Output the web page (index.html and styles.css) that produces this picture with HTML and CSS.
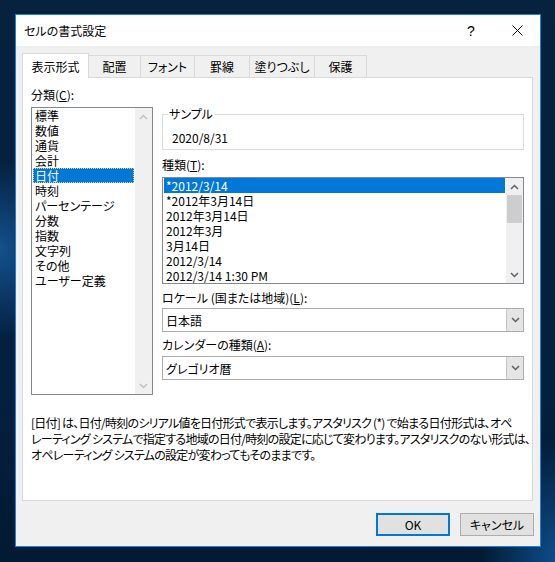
FILE: index.html
```html
<!DOCTYPE html>
<html lang="ja">
<head>
<meta charset="utf-8">
<title>セルの書式設定</title>
<link rel="stylesheet" href="styles.css">
</head>
<body>
<div class="dialog">
  <div class="titlebar">
    <span class="title">セルの書式設定</span>
    <span class="caption-btn help">?</span>
    <span class="caption-btn close">
      <svg width="11" height="11" viewBox="0 0 11 11"><path d="M0.5 0.5 L10.5 10.5 M10.5 0.5 L0.5 10.5" stroke="#000" stroke-width="1" fill="none"/></svg>
    </span>
  </div>

  <div class="body">
    <div class="tabs">
      <div class="tab active tab-format">表示形式</div>
      <div class="tab tab-align">配置</div>
      <div class="tab tab-font">フォント</div>
      <div class="tab tab-border">罫線</div>
      <div class="tab tab-fill">塗りつぶし</div>
      <div class="tab tab-protect">保護</div>
    </div>

    <div class="panel">
      <div class="grid">
        <div class="col-left">
          <div class="label">分類(<u>C</u>):</div>
          <div class="listbox category">
            <ul class="items">
              <li>標準</li>
              <li>数値</li>
              <li>通貨</li>
              <li>会計</li>
              <li class="selected focus">日付</li>
              <li>時刻</li>
              <li>パーセンテージ</li>
              <li>分数</li>
              <li>指数</li>
              <li>文字列</li>
              <li>その他</li>
              <li>ユーザー定義</li>
            </ul>
            <div class="vscroll disabled">
              <div class="sb-btn"><svg width="9" height="6" viewBox="0 0 9 6"><polyline points="1,5 4.5,1.5 8,5" /></svg></div>
              <div class="sb-track"></div>
              <div class="sb-btn"><svg width="9" height="6" viewBox="0 0 9 6"><polyline points="1,1 4.5,4.5 8,1" /></svg></div>
            </div>
          </div>
        </div>

        <div class="col-right">
          <fieldset class="sample">
            <legend>サンプル</legend>
            <div class="sample-value">2020/8/31</div>
          </fieldset>

          <div class="label label-types">種類(<u>T</u>):</div>
          <div class="listbox types">
            <ul class="items">
              <li class="selected">*2012/3/14</li>
              <li>*2012年3月14日</li>
              <li>2012年3月14日</li>
              <li>2012年3月</li>
              <li>3月14日</li>
              <li>2012/3/14</li>
              <li>2012/3/14 1:30 PM</li>
            </ul>
            <div class="vscroll">
              <div class="sb-btn"><svg width="9" height="6" viewBox="0 0 9 6"><polyline points="1,5 4.5,1.5 8,5" /></svg></div>
              <div class="sb-track"><div class="sb-thumb"></div></div>
              <div class="sb-btn"><svg width="9" height="6" viewBox="0 0 9 6"><polyline points="1,1 4.5,4.5 8,1" /></svg></div>
            </div>
          </div>

          <div class="label label-locale">ロケール (国または地域)(<u>L</u>):</div>
          <div class="combo combo-locale">
            <span class="combo-text">日本語</span>
            <span class="combo-btn"><svg width="9" height="6" viewBox="0 0 9 6"><polyline points="1,1 4.5,4.5 8,1" /></svg></span>
          </div>

          <div class="label label-calendar">カレンダーの種類(<u>A</u>):</div>
          <div class="combo combo-calendar">
            <span class="combo-text">グレゴリオ暦</span>
            <span class="combo-btn"><svg width="9" height="6" viewBox="0 0 9 6"><polyline points="1,1 4.5,4.5 8,1" /></svg></span>
          </div>
        </div>
      </div>

      <p class="desc">[日付] は、日付/時刻のシリアル値を日付形式で表示します。アスタリスク (*) で始まる日付形式は、オペ<br>レーティング システムで指定する地域の日付/時刻の設定に応じて変わります。アスタリスクのない形式は、<br>オペレーティング システムの設定が変わってもそのままです。</p>
    </div>

    <div class="buttons">
      <div class="btn default">OK</div>
      <div class="btn">キャンセル</div>
    </div>
  </div>
</div>
</body>
</html>
```

FILE: styles.css
```css
* {
  box-sizing: border-box;
}

html,
body {
  margin: 0;
}

body {
  width: 555px;
  height: 562px;
  overflow: hidden;
  padding: 14px 0 0 15px;
  font-family: "Noto Sans CJK JP", "Noto Sans", sans-serif;
  font-size: 12px;
  color: #000;
  font-feature-settings: "palt";
  background:
    radial-gradient(ellipse 60px 90px at 0px 250px, rgba(24, 98, 170, 0.75), rgba(24, 98, 170, 0) 100%),
    radial-gradient(ellipse 80px 120px at 560px 560px, rgba(18, 92, 165, 0.8), rgba(18, 92, 165, 0) 100%),
    linear-gradient(180deg, #07223f 0%, #04203d 40%, #03203e 70%, #021a33 100%);
}

/* window frame */
.dialog {
  width: 526px;
  height: 533px;
  border: 1px solid #1883d7;
  background: #f0f0f0;
  display: flex;
  flex-direction: column;
}

.titlebar {
  height: 31px;
  flex: none;
  background: #fff;
  display: flex;
  align-items: center;
  padding-left: 8px;
}

.title {
  flex: 1;
  line-height: 16px;
}

.caption-btn {
  width: 46px;
  height: 31px;
  display: flex;
  align-items: center;
  justify-content: center;
}

.help {
  font-family: "Liberation Sans", sans-serif;
  font-size: 14px;
}

/* dialog body */
.body {
  flex: 1;
  display: flex;
  flex-direction: column;
  padding: 7px 7px 10px 6px;
}

.tabs {
  display: flex;
  align-items: flex-end;
  height: 25px;
  margin-bottom: -1px;
  position: relative;
  z-index: 1;
}

.tab {
  height: 22px;
  margin-bottom: 1px;
  border: 1px solid #d9d9d9;
  border-left: none;
  border-bottom: none;
  background: #f0f0f0;
  display: flex;
  align-items: center;
  justify-content: center;
  white-space: nowrap;
}

.tab.active {
  height: 25px;
  margin-bottom: 0;
  background: #fff;
  border-left: 1px solid #d9d9d9;
}

.tab-format { width: 67px; }
.tab-align { width: 52px; }
.tab-font { width: 54px; }
.tab-border { width: 55px; }
.tab-fill { width: 65px; }
.tab-protect { width: 52px; }

.panel {
  height: 424px;
  flex: none;
  background: #fff;
  border: 1px solid #d9d9d9;
  padding: 9px 7px 0 8px;
}

.grid {
  display: grid;
  grid-template-columns: 122px 362px;
  column-gap: 9px;
}

.col-left,
.col-right {
  display: flex;
  flex-direction: column;
}

.label {
  height: 16px;
  line-height: 16px;
  white-space: nowrap;
}

.col-left .label {
  margin-bottom: 4px;
}

.label-types { margin-top: 7px; }
.label-locale { margin-top: 6px; }
.label-calendar { margin-top: 5px; }

/* list boxes */
.listbox {
  border: 1px solid #828790;
  background: #fff;
  display: flex;
}

.category {
  height: 288px;
}

.types {
  height: 107px;
  margin-top: 4px;
}

.items {
  list-style: none;
  margin: 0;
  padding: 0;
  flex: 1;
  min-width: 0;
}

.items li {
  height: 15px;
  line-height: 15px;
  margin: 0 1px;
  padding-left: 2px;
  white-space: nowrap;
}

.items li.selected {
  background: #0078d7;
  color: #fff;
}

.items li.focus {
  outline: 1px dotted #f3c98f;
  outline-offset: -1px;
}

.vscroll {
  width: 17px;
  flex: none;
  background: #f0f0f0;
  display: flex;
  flex-direction: column;
}

.sb-btn {
  height: 17px;
  display: flex;
  align-items: center;
  justify-content: center;
}

.sb-btn polyline,
.combo-btn polyline {
  fill: none;
  stroke: #606060;
  stroke-width: 1.5;
}

.vscroll.disabled polyline {
  stroke: #c0c0c0;
}

.sb-track {
  flex: 1;
  padding: 0 1px;
}

.sb-thumb {
  height: 28px;
  background: #cdcdcd;
}

/* sample group */
.sample {
  margin: 20px 0 0;
  padding: 9px 0 3px 9px;
  border: 1px solid #dcdcdc;
}

.sample legend {
  margin-left: -4px;
  padding: 0 1px;
  line-height: 14px;
}

.sample-value {
  line-height: 16px;
  height: 16px;
}

/* drop-down boxes */
.combo {
  height: 24px;
  margin-top: 2px;
  border: 1px solid #adadad;
  background: #fff;
  display: flex;
  align-items: center;
  padding-left: 3px;
}

.combo-calendar {
  margin-top: 3px;
}

.combo-text {
  flex: 1;
  white-space: nowrap;
}

.combo-btn {
  width: 17px;
  align-self: stretch;
  background: #e5e5e5;
  border-left: 1px solid #c4c4c4;
  display: flex;
  align-items: center;
  justify-content: center;
}

/* description */
.desc {
  margin: 20px 0 0;
  line-height: 16px;
  white-space: nowrap;
  letter-spacing: -0.75px;
}

/* command buttons */
.buttons {
  margin-top: 12px;
  margin-right: -1px;
  display: flex;
  justify-content: flex-end;
  gap: 10px;
}

.btn {
  width: 74px;
  height: 23px;
  background: #e1e1e1;
  border: 1px solid #adadad;
  display: flex;
  align-items: center;
  justify-content: center;
  white-space: nowrap;
}

.btn.default {
  border: 2px solid #0078d7;
}
```
